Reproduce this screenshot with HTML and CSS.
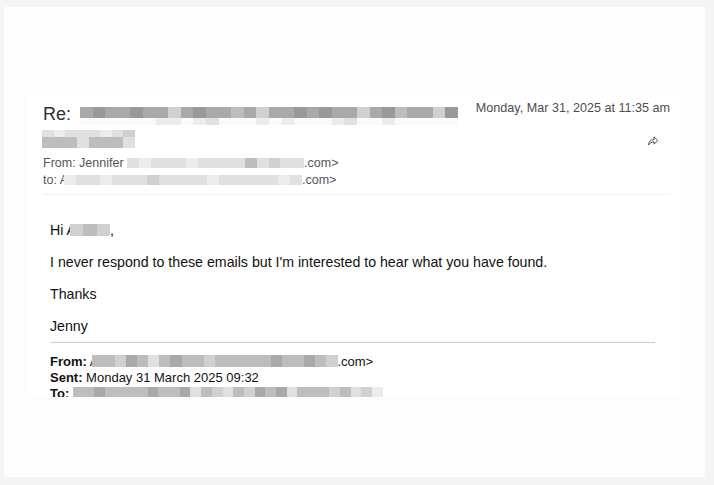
FILE: index.html
```html
<!DOCTYPE html>
<html lang="en">
<head>
<meta charset="utf-8">
<title>Re: email</title>
<link rel="stylesheet" href="styles.css">
</head>
<body>
<div class="frame">
  <div class="shot">
    <header class="head">
      <div class="head-main">
        <div class="subject">
          <span class="re">Re:</span>
          <span class="blur blur-subj">
            <span class="row r-dark"><i class="c5"></i><i class="c6"></i><i class="c5"></i><i class="c5"></i><i class="c6"></i><i class="c5"></i><i class="c5"></i><i class="c3"></i><i class="c5"></i><i class="c6"></i><i class="c5"></i><i class="c5"></i><i class="c4"></i><i class="c5"></i><i class="c3"></i><i class="c5"></i><i class="c5"></i><i class="c6"></i><i class="c5"></i><i class="c6"></i><i class="c5"></i><i class="c5"></i><i class="c3"></i><i class="c5"></i><i class="c6"></i><i class="c4"></i><i class="c5"></i><i class="c5"></i><i class="c3"></i><i class="c6"></i></span>
            <span class="row r-light"><i class="c0"></i><i class="c0"></i><i class="c0"></i><i class="c0"></i><i class="c0"></i><i class="c0"></i><i class="c1"></i><i class="c1"></i><i class="c0"></i><i class="c1"></i><i class="c2"></i><i class="c0"></i><i class="c0"></i><i class="c0"></i><i class="c1"></i><i class="c0"></i><i class="c1"></i><i class="c0"></i><i class="c0"></i><i class="c0"></i><i class="c1"></i><i class="c2"></i><i class="c0"></i><i class="c0"></i><i class="c1"></i><i class="c0"></i><i class="c0"></i><i class="c0"></i><i class="c0"></i><i class="c0"></i></span>
          </span>
        </div>
        <div class="subject2">
          <span class="blur blur-subj2">
            <span class="row r-light"><i class="c2"></i><i class="c1"></i><i class="c2"></i><i class="c2"></i><i class="c2"></i><i class="c1"></i><i class="c2"></i><i class="c3"></i></span>
            <span class="row r-dark"><i class="c4"></i><i class="c4"></i><i class="c4"></i><i class="c2"></i><i class="c4"></i><i class="c4"></i><i class="c4"></i><i class="c2"></i></span>
          </span>
        </div>
        <div class="addr">From: Jennifer <span class="blur blur-from"><span class="row r-line"><i class="c2"></i><i class="c1"></i><i class="c2"></i><i class="c2"></i><i class="c2"></i><i class="c1"></i><i class="c2"></i><i class="c2"></i><i class="c2"></i><i class="c2"></i><i class="c4"></i><i class="c2"></i><i class="c3"></i><i class="c2"></i><i class="c2"></i></span></span>.com&gt;</div>
        <div class="addr">to: A<span class="blur blur-to"><span class="row r-line"><i class="c1"></i><i class="c2"></i><i class="c2"></i><i class="c1"></i><i class="c2"></i><i class="c2"></i><i class="c2"></i><i class="c3"></i><i class="c2"></i><i class="c2"></i><i class="c2"></i><i class="c2"></i><i class="c1"></i><i class="c2"></i><i class="c2"></i><i class="c2"></i><i class="c2"></i><i class="c2"></i><i class="c1"></i><i class="c2"></i></span></span>.com&gt;</div>
      </div>
      <div class="head-side">
        <div class="date">Monday, Mar 31, 2025 at 11:35 am</div>
        <svg class="fwd" width="12" height="11" viewBox="0 0 12 11" aria-hidden="true">
          <path d="M1.5 10 C1.8 6.2 4 4.6 7 4.6 V1.8 L10.8 5.5 L7 9.1 V6.8 C4.7 6.8 2.8 7.9 1.5 10 Z" fill="none" stroke="#4a4a4a" stroke-width="1" stroke-linejoin="round"/>
        </svg>
      </div>
    </header>

    <main class="body">
      <p>Hi A<span class="blur blur-hi"><span class="row r-hi"><i class="c3"></i><i class="c4"></i><i class="c3"></i></span></span>,</p>
      <p>I never respond to these emails but I'm interested to hear what you have found.</p>
      <p>Thanks</p>
      <p>Jenny</p>
      <hr class="rule">
      <div class="fwd-head">
        <div class="fline"><b>From:</b> A<span class="blur blur-ffrom"><span class="row r-hi"><i class="c4"></i><i class="c4"></i><i class="c3"></i><i class="c5"></i><i class="c4"></i><i class="c2"></i><i class="c4"></i><i class="c5"></i><i class="c4"></i><i class="c4"></i><i class="c3"></i><i class="c4"></i><i class="c4"></i><i class="c4"></i><i class="c4"></i><i class="c4"></i><i class="c5"></i><i class="c4"></i><i class="c4"></i><i class="c5"></i><i class="c4"></i><i class="c3"></i></span></span>.com&gt;</div>
        <div class="fline"><b>Sent:</b> Monday 31 March 2025 09:32</div>
        <div class="fline"><b>To:</b> <span class="blur blur-fto"><span class="row r-hi"><i class="c4"></i><i class="c4"></i><i class="c5"></i><i class="c4"></i><i class="c4"></i><i class="c4"></i><i class="c4"></i><i class="c5"></i><i class="c4"></i><i class="c4"></i><i class="c5"></i><i class="c2"></i><i class="c4"></i><i class="c3"></i><i class="c2"></i><i class="c4"></i><i class="c3"></i><i class="c5"></i><i class="c4"></i><i class="c5"></i><i class="c2"></i><i class="c4"></i><i class="c4"></i><i class="c4"></i><i class="c3"></i><i class="c4"></i><i class="c2"></i><i class="c3"></i><i class="c1"></i></span></span></div>
      </div>
    </main>
  </div>
</div>
</body>
</html>
```

FILE: styles.css
```css
* { box-sizing: border-box; }

html, body {
  margin: 0;
  padding: 0;
}

body {
  background: #f4f4f4;
  font-family: "Liberation Sans", Arial, Helvetica, sans-serif;
  width: 714px;
  height: 485px;
  overflow: hidden;
}

.frame {
  margin: 7px 0 0 4px;
  width: 701px;
  height: 470px;
  background: #fdfdfd;
  padding: 83px 0 0 26px;
}

.shot {
  width: 650px;
  height: 307px;
  overflow: hidden;
  background: #ffffff;
}

/* header */
.head {
  display: flex;
  justify-content: space-between;
  align-items: flex-start;
  margin: 0 10px 0 13px;
  padding-bottom: 5px;
  border-bottom: 1px solid #f0f0f0;
}

.head-main {
  display: flex;
  flex-direction: column;
  padding-top: 14px;
}

.subject {
  display: flex;
  align-items: flex-start;
  height: 21px;
}

.re {
  font-size: 18px;
  line-height: 20px;
  color: #2e2e2e;
}

.subject2 {
  display: flex;
  margin-top: 5px;
  margin-left: -1px;
  height: 18px;
}

.addr {
  font-size: 12.5px;
  line-height: 17px;
  color: #555;
  white-space: nowrap;
}

.subject2 + .addr { margin-top: 7px; }

.head-side {
  display: flex;
  flex-direction: column;
  align-items: flex-end;
  padding-top: 10px;
}

.date {
  font-size: 12.6px;
  line-height: 16px;
  color: #4d4d4d;
  white-space: nowrap;
}

.fwd {
  display: block;
  margin-top: 19px;
  margin-right: 11px;
}

/* blurred (pixelated) redactions */
.blur {
  display: inline-flex;
  flex-direction: column;
  vertical-align: middle;
}

.blur .row {
  display: flex;
}

.blur i {
  flex: 1;
  display: block;
}

.r-dark { height: 11px; }
.r-light { height: 7px; }
.r-line { height: 10px; }
.r-hi { height: 12px; }

.c0 { background: #fafafa; }
.c1 { background: #ececec; }
.c2 { background: #e0e0e0; }
.c3 { background: #d0d0d0; }
.c4 { background: #bdbdbd; }
.c5 { background: #a9a9a9; }
.c6 { background: #999999; }

.blur-subj { width: 378px; margin: 3px 0 0 9px; }
.blur-subj2 { width: 93px; }
.blur-from { width: 177px; margin: -2px 0 0 0; }
.blur-to { width: 238px; margin: -2px 0 0 -4px; }
.blur-hi { width: 40px; margin: -3px 0 0 -6px; }
.blur-ffrom { width: 245px; margin: -3px 0 0 -6px; }
.blur-fto { width: 310px; margin: -3px 0 0 0; }

/* body */
.body {
  padding: 27px 25px 0 20px;
  color: #111;
}

.body p {
  margin: 0 0 16px;
  font-size: 14.2px;
  line-height: 16px;
  white-space: nowrap;
}

.body p:nth-of-type(4) { margin-bottom: 8px; }

.rule {
  margin: 0;
  border: 0;
  border-top: 1px solid #cccccc;
}

.fwd-head {
  padding-top: 11px;
}

.fline {
  font-size: 13px;
  line-height: 16px;
  color: #111;
  white-space: nowrap;
}

.fline b { font-weight: bold; }
```
